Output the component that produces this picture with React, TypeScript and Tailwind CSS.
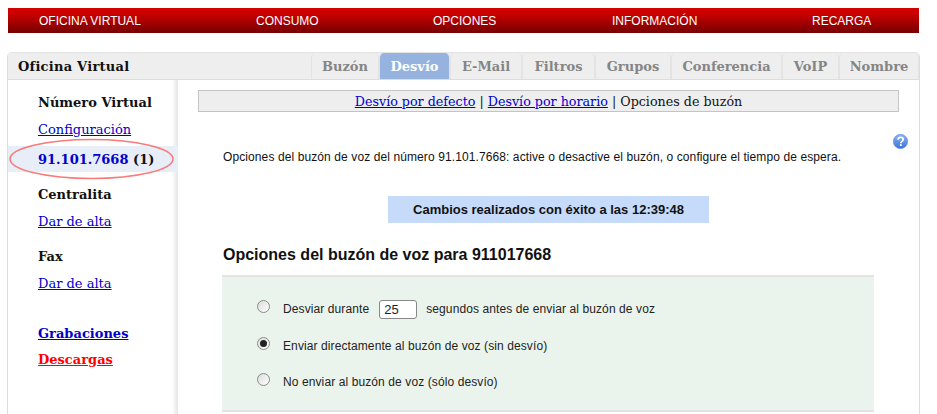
import React from 'react';

const serif = 'font-["DejaVu_Serif",serif]';
const sans = 'font-["Liberation_Sans",Arial,sans-serif]';

const menu = [
  { label: 'OFICINA VIRTUAL', width: 'w-[217px]' },
  { label: 'CONSUMO', width: 'w-[177px]' },
  { label: 'OPCIONES', width: 'w-[179px]' },
  { label: 'INFORMACIÓN', width: 'w-[200px]' },
  { label: 'RECARGA', width: 'w-auto' },
];

const tabs = [
  { label: 'Buzón', width: 'w-[68px]' },
  { label: 'Desvío', width: 'w-[71px]', active: true },
  { label: 'E-Mail', width: 'w-[72px]' },
  { label: 'Filtros', width: 'w-[73px]' },
  { label: 'Grupos', width: 'w-[76px]' },
  { label: 'Conferencia', width: 'w-[111px]' },
  { label: 'VoIP', width: 'w-[57px]' },
  { label: 'Nombre', width: 'w-[80px]' },
];

const Radio = ({ checked = false }: { checked?: boolean }) => (
  <span className="w-[13px] h-[13px] -mt-[5px] rounded-full border border-[#8a8a8a] bg-[linear-gradient(135deg,#dcdcdc,#ffffff)] flex items-center justify-center shrink-0">
    {checked && <span className="w-[7px] h-[7px] rounded-full bg-[#222222]" />}
  </span>
);

const HelpIcon = () => (
  <svg width="15" height="15" viewBox="0 0 15 15" className="absolute right-[11px] top-[54px]">
    <defs>
      <linearGradient id="help" x1="0" y1="0" x2="0" y2="1">
        <stop offset="0" stopColor="#8fb4f2" />
        <stop offset="1" stopColor="#3a72dc" />
      </linearGradient>
    </defs>
    <circle cx="7.5" cy="7.5" r="7.2" fill="url(#help)" stroke="#5a8ae0" strokeWidth="0.6" />
    <path d="M5 5.8C5 4.3 6.1 3.4 7.6 3.4C9.1 3.4 10.2 4.3 10.2 5.6C10.2 7.4 7.8 7.4 7.8 9.2" fill="none" stroke="#ffffff" strokeWidth="1.7" />
    <rect x="6.9" y="10.2" width="1.8" height="1.8" fill="#ffffff" />
  </svg>
);

export default function App() {
  return (
    <div className="w-[937px] h-[414px] overflow-hidden bg-white relative">
      <div className="w-[911px] ml-[8px] pt-[8px]">
        <div className={`h-[25px] flex items-center pl-[31px] bg-[linear-gradient(#d40000_0%,#c80000_25%,#760000_100%)] text-white text-[12px] ${sans}`}>
          {menu.map((m) => (
            <span key={m.label} className={`${m.width} shrink-0`}>{m.label}</span>
          ))}
        </div>
      </div>

      <div className="w-[913px] ml-[7px] mt-[19px] h-[400px] border-x border-[#dddddd] rounded-t-[5px] overflow-hidden">
        <div className="h-[28px] flex bg-[#eeeeee] border-b border-[#dddddd] border-t border-t-[#e3e3e3]">
          <div className={`flex-1 pl-[10px] leading-[27px] text-[13px] tracking-[0.25px] font-bold text-[#111111] ${serif}`}>Oficina Virtual</div>
          <div className="flex">
            {tabs.map((t) => (
              <div
                key={t.label}
                className={`${t.width} text-center leading-[27px] text-[13px] font-bold rounded-t-[5px] border-x border-[#e3e3e3] ${serif} ${t.active ? 'bg-[#95b3de] text-white border-[#95b3de]' : 'text-[#858585]'}`}
              >
                {t.label}
              </div>
            ))}
          </div>
        </div>

        <div className="flex h-[340px]">
          <div className={`w-[170px] shrink-0 pt-[14px] bg-[linear-gradient(to_right,#ffffff_164px,#e4e4e4_170px)] ${serif} text-[13px]`}>
            <p className="pl-[30px] font-bold text-[#111111] leading-[17px]">Número Virtual</p>
            <p className="pl-[30px] mt-[10px] leading-[17px]"><a className="text-[#0000cc] underline">Configuración</a></p>
            <p className="mt-[8px] h-[26px] pl-[30px] leading-[27px] bg-[#e8eef8] font-bold text-[#111111]"><span className="text-[#0000cc]">91.101.7668</span> (1)</p>
            <p className="pl-[30px] mt-[14px] font-bold text-[#111111] leading-[17px]">Centralita</p>
            <p className="pl-[30px] mt-[10px] leading-[17px]"><a className="text-[#0000cc] underline">Dar de alta</a></p>
            <p className="pl-[30px] mt-[18px] font-bold text-[#111111] leading-[17px]">Fax</p>
            <p className="pl-[30px] mt-[10px] leading-[17px]"><a className="text-[#0000cc] underline">Dar de alta</a></p>
            <p className="pl-[30px] mt-[33px] font-bold leading-[17px]"><a className="text-[#0000cc] underline">Grabaciones</a></p>
            <p className="pl-[30px] mt-[9px] font-bold leading-[17px]"><a className="text-[#ff0000] underline">Descargas</a></p>
          </div>

          <div className="flex-1 relative pt-[10px] pl-[20px]">
            <div className={`w-[701px] h-[22px] border border-[#c4c4c4] bg-[#eeeeee] text-center text-[12.7px] leading-[22px] text-[#111111] ${serif}`}>
              <a className="text-[#0000cc] underline">Desvío por defecto</a> | <a className="text-[#0000cc] underline">Desvío por horario</a> | Opciones de buzón
            </div>
            <HelpIcon />
            <div className={`pl-[25px] ${sans}`}>
              <p className="mt-[38px] text-[12px] leading-[14px] text-[#111111] tracking-[0.1px]">
                Opciones del buzón de voz del número 91.101.7668: active o desactive el buzón, o configure el tiempo de espera.
              </p>
              <div className="mt-[32px] ml-[165px] w-[321px] h-[27px] bg-[#c6daf9] text-center text-[13px] leading-[27px] font-bold text-[#111111]">
                Cambios realizados con éxito a las 12:39:48
              </div>
              <h2 className="mt-[22px] text-[16px] leading-[20px] font-bold text-[#111111]">Opciones del buzón de voz para 911017668</h2>
              <div className="mt-[10px] -ml-px w-[652px] h-[137px] border-y-2 border-[#e3e3e3] bg-[#ebf4ec] pl-[35px] pt-[22px] text-[12px] text-[#222222] tracking-[0.1px]">
                <div className="flex items-center h-[20px]">
                  <Radio />
                  <span className="ml-[13px]">Desviar durante</span>
                  <span className="ml-[10px] w-[38px] h-[19px] border border-[#888888] rounded-[3px] bg-white text-[13px] leading-[17px] pl-[4px]">25</span>
                  <span className="ml-[9px]">segundos antes de enviar al buzón de voz</span>
                </div>
                <div className="flex items-center h-[20px] mt-[17px]">
                  <Radio checked />
                  <span className="ml-[13px]">Enviar directamente al buzón de voz (sin desvío)</span>
                </div>
                <div className="flex items-center h-[20px] mt-[16px]">
                  <Radio />
                  <span className="ml-[13px]">No enviar al buzón de voz (sólo desvío)</span>
                </div>
              </div>
            </div>
          </div>
        </div>
      </div>

      <svg width="166" height="44" viewBox="0 0 166 44" className="absolute left-[9px] top-[138px]">
        <ellipse cx="82.5" cy="21" rx="81.5" ry="19.5" fill="none" stroke="#f87a7a" strokeWidth="1.5" />
      </svg>
    </div>
  );
}
